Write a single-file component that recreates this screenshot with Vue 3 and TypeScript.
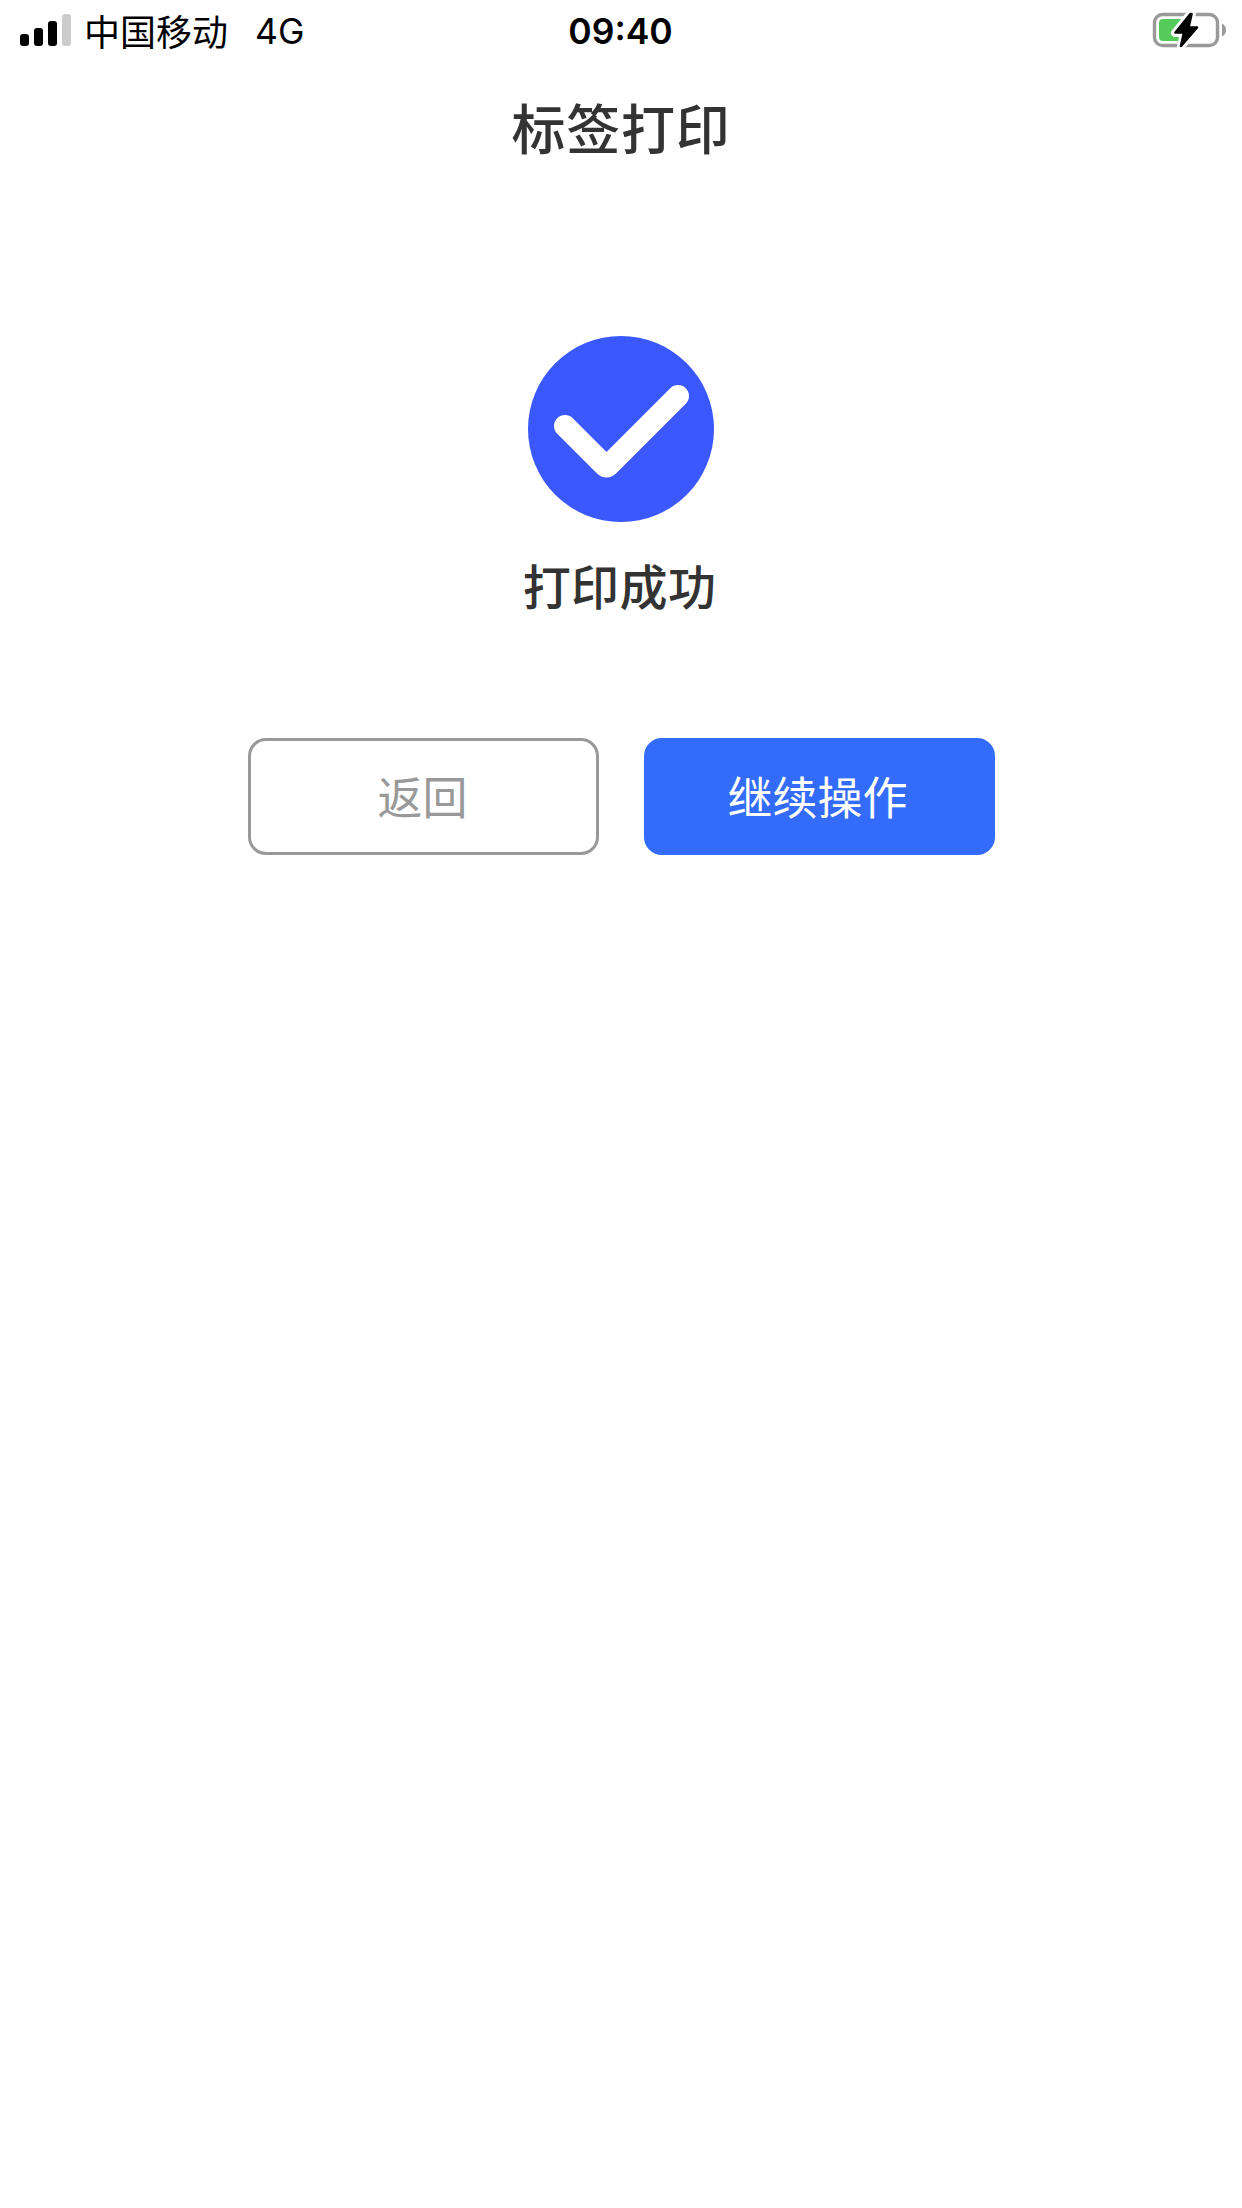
<script setup lang="ts">
interface Bar {
  x: number
  y: number
  fill: string
}

const bars: Bar[] = [
  { x: 20, y: 34, fill: '#000' },
  { x: 34, y: 28, fill: '#000' },
  { x: 48, y: 21, fill: '#000' },
  { x: 62, y: 14, fill: '#ccc' },
]
</script>

<template>
  <div class="screen">
    <header class="status">
      <div class="side">
        <svg class="signal" width="72" height="60" viewBox="0 0 72 60">
          <rect v-for="b in bars" :key="b.x" :x="b.x" :y="b.y" width="9" :height="46 - b.y" rx="3" :fill="b.fill" />
        </svg>
        <span class="carrier">中国移动</span>
        <span class="network">4G</span>
      </div>
      <span class="time">09:40</span>
      <div class="side end">
        <svg width="102" height="60" viewBox="1140 0 102 60">
          <rect x="1154.5" y="14.5" width="63" height="31" rx="8" fill="#fff" stroke="#999" stroke-width="3.4" />
          <path d="M1222 23.5Q1226 25.5 1226 30T1222 36.5Z" fill="#999" />
          <rect x="1159" y="19" width="32" height="22" rx="4" fill="#55cb5c" />
          <path d="M1191 13L1175 33H1184L1181 46.5L1197 27.5H1188.5L1192 13.5Z" fill="#fff" stroke="#fff" stroke-width="8" stroke-linejoin="round" />
          <path d="M1190.5 14L1175.5 32.500H1184L1181 46L1197 27.500H1188.500L1191.500 14Z" fill="#000" stroke="#000" stroke-width="2.600" stroke-linejoin="round" />
        </svg>
      </div>
    </header>
    <h1 class="title">标签打印</h1>
    <main class="result">
      <svg class="check" width="186" height="186" viewBox="0 0 186 186">
        <circle cx="93" cy="93" r="93" fill="#3b58ff" />
        <path d="M37 90L76.500 129.500Q78.500 131.500 80.500 129.500L150 60" fill="none" stroke="#fff" stroke-width="22" stroke-linecap="round" stroke-linejoin="round" />
      </svg>
      <p class="message">打印成功</p>
      <div class="actions">
        <button class="btn back" type="button">返回</button>
        <button class="btn next" type="button">继续操作</button>
      </div>
    </main>
  </div>
</template>

<style>
body {
  background: #fff;
}
</style>

<style scoped>
.screen {
  width: 1242px;
  min-height: 2208px;
  background: #fff;
  font-family: "Noto Sans CJK SC", sans-serif;
}
.status {
  display: flex;
  align-items: center;
  height: 60px;
  color: #000;
  font-size: 36px;
  line-height: 60px;
}
.side {
  display: flex;
  align-items: center;
  flex: 1;
}
.side svg {
  display: block;
}
.end {
  justify-content: flex-end;
}
.carrier {
  margin: -1px 0 0 12px;
  white-space: nowrap;
}
.network {
  margin: 4px 0 0 27px;
  font-family: Inter, sans-serif;
  font-size: 35.5px;
}
.time {
  margin: 3px 1px 0 0;
  font-family: Inter, sans-serif;
  font-size: 35.5px;
  font-weight: 600;
}
.title {
  margin: 0;
  padding: 27px 0 1px;
  color: #333;
  font-size: 54px;
  font-weight: 500;
  letter-spacing: 0.7px;
  line-height: 80px;
  text-align: center;
}
.result {
  display: flex;
  flex-direction: column;
  align-items: center;
  padding-top: 168px;
}
.message {
  margin: 26px 3px 0 0;
  color: #333;
  font-size: 48px;
  font-weight: 500;
  letter-spacing: 0.4px;
  line-height: 72px;
}
.actions {
  display: flex;
  gap: 45px;
  margin-top: 118px;
}
.btn {
  box-sizing: border-box;
  width: 351px;
  height: 117px;
  padding: 0 1px 2px 0;
  border: 3px solid #999;
  border-radius: 18px;
  background: #fff;
  color: #999;
  font-family: inherit;
  font-size: 45px;
  line-height: 109px;
}
.next {
  padding-right: 3px;
  border-color: #336cfb;
  background: #336cfb;
  color: #fff;
}
</style>
